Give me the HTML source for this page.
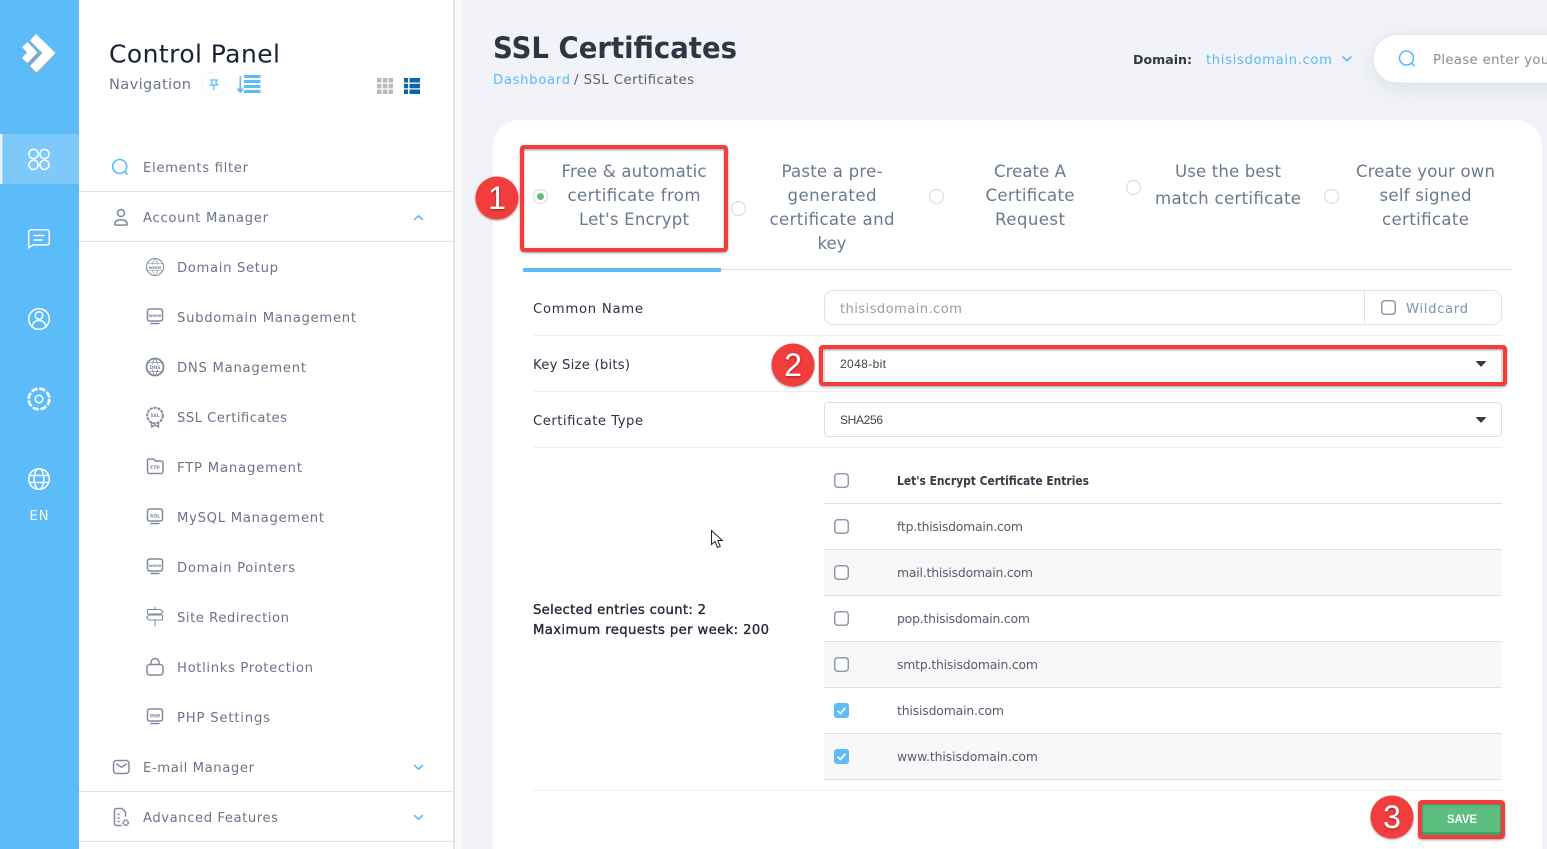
<!DOCTYPE html>
<html lang="en">
<head>
<meta charset="utf-8">
<title>SSL Certificates</title>
<style>
html,body{margin:0;padding:0;width:1547px;height:849px;overflow:hidden;background:#f1f3f8}
svg{display:block}
text{font-family:"DejaVu Sans","Liberation Sans",sans-serif}
.m{font-size:13.2px;fill:#6b7488}
.t{font-size:16.6px;fill:#6c7a8d;text-anchor:middle}
.l{font-size:13.2px;fill:#2c3345}
.e{font-size:12.4px;fill:#565b6e}
.tiny{font-size:4.5px;fill:#8089a0;text-anchor:middle;font-weight:bold}
.ic{fill:none;stroke:#8089a0;stroke-width:1.5;stroke-linecap:round;stroke-linejoin:round}
.w{fill:none;stroke:#fff;stroke-width:1.5;stroke-linecap:round;stroke-linejoin:round}
.b{fill:none;stroke:#5cbbf9;stroke-width:1.6;stroke-linecap:round;stroke-linejoin:round}
.n{font-family:"Liberation Sans",sans-serif;font-size:32px;fill:#fff;text-anchor:middle}
</style>
</head>
<body>
<svg width="1547" height="849" viewBox="0 0 1547 849" xmlns="http://www.w3.org/2000/svg">
<defs>
<filter id="sh" x="-20%" y="-20%" width="140%" height="140%"><feDropShadow dx="0" dy="1" stdDeviation="1" flood-color="#000" flood-opacity=".4"/></filter>
<filter id="soft" x="-30%" y="-60%" width="160%" height="240%"><feDropShadow dx="0" dy="6" stdDeviation="10" flood-color="#8088a8" flood-opacity=".16"/></filter>
<symbol id="mon" viewBox="0 0 20 20" overflow="visible"><rect x="2.5" y="2" width="15" height="12" rx="2" class="ic"/><path d="M6 16.500h8" class="ic"/></symbol>
<symbol id="cb" viewBox="0 0 15 15"><rect x=".75" y=".75" width="13.500" height="13.500" rx="3" fill="#fff" stroke="#7e8aa0" stroke-width="1.300"/></symbol>
<symbol id="cbon" viewBox="0 0 15 15"><rect width="15" height="15" rx="3" fill="#5cbbf9"/><path d="M3.500 7.700l2.800 2.800 5.200-5.700" fill="none" stroke="#fff" stroke-width="1.700"/></symbol>
</defs>

<!-- page -->
<rect width="1547" height="849" fill="#f1f3f8"/>
<rect x="455" width="7" height="849" fill="#fafafa"/>

<!-- icon rail -->
<rect width="79" height="849" fill="#5cbbf9"/>
<rect y="134" width="79" height="50" fill="#7dc9fa"/>
<rect x="0" y="134" width="2.500" height="50" fill="#e4f4fe"/>
<path d="M29 43l9.500 10-9.500 10.500-7-6 4.500-4.500-5-5z" fill="#9a9a9a" opacity=".75" transform="translate(1 1.500)"/>
<path d="M36 34l19.500 19-19 19.500-6.500-6.500 12.500-13-12.500-12.500z" fill="#a8a8a8" transform="translate(0 1.500)"/>
<path d="M36 34l19.500 19-19 19.500-6.500-6.500 12.500-13-12.500-12.500z" fill="#fff"/>
<path d="M27.500 42l10 10.500-10 10.500-5.500-5 5-5.500-5-5.500z" fill="#fff"/>
<g class="w">
<circle cx="33.500" cy="154" r="4.600"/><circle cx="44.500" cy="154" r="4.600"/><circle cx="33.500" cy="164.800" r="4.600"/><circle cx="44.500" cy="164.800" r="4.600"/>
<path d="M31 229.800h16a2.300 2.300 0 0 1 2.300 2.300v10.500a2.300 2.300 0 0 1-2.300 2.300H33l-4.300 3V232.100a2.300 2.300 0 0 1 2.300-2.300z"/>
<path d="M34 235.500h10M34 240h8"/>
<circle cx="39" cy="319" r="10.300"/><circle cx="39" cy="315.500" r="3.800"/><path d="M32 327c.5-4.500 3.500-6.500 7-6.500s6.500 2 7 6.500"/>
<circle cx="39" cy="399" r="10.300" style="stroke-width:2.600;stroke-linecap:butt" stroke-dasharray="6.300 1.790"/>
<circle cx="39" cy="399" r="3.800"/>
<circle cx="39" cy="479" r="10.300"/><ellipse cx="39" cy="479" rx="4.800" ry="10.300"/><path d="M29.500 475.500h19M29.500 482.500h19"/>
</g>
<text x="29.500" y="520" font-size="13px" font-weight="500" fill="#fff" textLength="19">EN</text>

<!-- sidebar -->
<rect x="79" width="374" height="849" fill="#fff"/>
<rect x="453" width="2" height="849" fill="#e2e2e8"/>
<text x="109" y="62.500" font-size="25px" fill="#1b2235" textLength="171">Control Panel</text>
<text x="109" y="89" font-size="14.600px" fill="#6c7488" textLength="82">Navigation</text>
<circle cx="214" cy="84" r="12" fill="#fff" stroke="#f3f5f8"/>
<g class="b" style="stroke-width:1.300"><path d="M210.500 80h7M211.800 80v4.500M216.200 80v4.500M209.700 85h8.600M214 85v5"/></g>
<g fill="#5cbbf9"><rect x="244" y="75" width="16.500" height="3"/><rect x="244" y="80" width="16.500" height="3"/><rect x="244" y="85" width="16.500" height="3"/><rect x="244" y="90" width="16.500" height="3"/><rect x="239.500" y="76" width="1.500" height="16"/><path d="M236.500 88.500h7.500l-3.750 5z"/></g>
<g fill="#bbb"><rect x="377" y="78" width="4.500" height="4.500"/><rect x="382.800" y="78" width="4.500" height="4.500"/><rect x="388.500" y="78" width="4.500" height="4.500"/><rect x="377" y="83.800" width="4.500" height="4.500"/><rect x="382.800" y="83.800" width="4.500" height="4.500"/><rect x="388.500" y="83.800" width="4.500" height="4.500"/><rect x="377" y="89.500" width="4.500" height="4.500"/><rect x="382.800" y="89.500" width="4.500" height="4.500"/><rect x="388.500" y="89.500" width="4.500" height="4.500"/></g>
<g fill="#0b66a8"><rect x="404" y="78" width="4" height="4.500"/><rect x="409.500" y="78" width="10.500" height="4.500"/><rect x="404" y="83.800" width="4" height="4.500"/><rect x="409.500" y="83.800" width="10.500" height="4.500"/><rect x="404" y="89.500" width="4" height="4.500"/><rect x="409.500" y="89.500" width="10.500" height="4.500"/></g>

<circle cx="119.700" cy="166.500" r="7" class="b"/><path d="M124.800 171.800l2.200 2.200" class="b"/>
<text x="143" y="172" class="m" textLength="105">Elements filter</text>
<path d="M79 191.500h374M79 241.500h374M79 791.500h374M79 841.500h374" stroke="#dfe2ec" stroke-width="1.200"/>
<circle cx="121" cy="213" r="3.500" class="ic"/><path d="M114.800 224.500c0-3.500 2.500-4.700 6.200-4.700s6.200 1.200 6.200 4.700c0 .5-1 .6-2 .6h-8.500c-1 0-1.900-.1-1.900-.6z" class="ic"/>
<text x="143" y="222" class="m" textLength="125">Account Manager</text>
<path d="M414.500 219.500l4-3.700 4 3.700" class="b"/>

<text x="177" y="272" class="m" textLength="101">Domain Setup</text>
<text x="177" y="322" class="m" textLength="179">Subdomain Management</text>
<text x="177" y="372" class="m" textLength="129">DNS Management</text>
<text x="177" y="422" class="m" textLength="110">SSL Certificates</text>
<text x="177" y="472" class="m" textLength="125">FTP Management</text>
<text x="177" y="522" class="m" textLength="147">MySQL Management</text>
<text x="177" y="572" class="m" textLength="118">Domain Pointers</text>
<text x="177" y="622" class="m" textLength="112">Site Redirection</text>
<text x="177" y="672" class="m" textLength="136">Hotlinks Protection</text>
<text x="177" y="722" class="m" textLength="93">PHP Settings</text>
<text x="143" y="772" class="m" textLength="111">E-mail Manager</text>
<text x="143" y="822" class="m" textLength="135">Advanced Features</text>
<path d="M414.500 765.500l4 3.700 4-3.700M414.500 815.500l4 3.700 4-3.700" class="b"/>

<!-- sidebar icons -->
<circle cx="155" cy="267" r="8.500" class="ic" style="stroke-width:1"/><path d="M147 263.500h16M147 270.500h16M155 258.500c-4 5-4 12 0 17M155 258.500c4 5 4 12 0 17" class="ic" style="stroke-width:.6"/><rect x="148" y="264.500" width="14" height="5" fill="#fff"/><text x="155" y="269" class="tiny">www</text>
<use href="#mon" x="145" y="307" width="20" height="20"/><text x="155" y="317" class="tiny">www</text>
<circle cx="155" cy="367" r="8.500" class="ic" style="stroke-width:1.800"/><path d="M147 362.500h16M147 371.500h16M155 358.500c-4 5-4 12 0 17M155 358.500c4 5 4 12 0 17" class="ic" style="stroke-width:.8"/><rect x="148" y="364.200" width="14" height="5.500" fill="#fff"/><text x="155" y="369" class="tiny">DNS</text>
<circle cx="155" cy="415.500" r="7.800" class="ic" style="stroke-width:2;stroke-linecap:butt" stroke-dasharray="3 .9"/><path d="M151.500 422.500v4.500l3.500-2 3.500 2v-4.500" class="ic"/><text x="155" y="417" class="tiny">SSL</text>
<path d="M147.500 460.500a1.500 1.500 0 0 1 1.500-1.500h4.500l2 2h5.500a2 2 0 0 1 2 2v8.500a2 2 0 0 1-2 2h-11.500a2 2 0 0 1-2-2z" class="ic"/><text x="155" y="469" class="tiny">FTP</text>
<use href="#mon" x="145" y="507" width="20" height="20"/><text x="155" y="517.500" class="tiny">SQL</text>
<use href="#mon" x="145" y="557" width="20" height="20"/><text x="155" y="567" class="tiny">www</text>
<path d="M155 607v2M155 620v6M147.500 609.500h13l2.500 2.200-2.500 2.300h-13zM149 615h13.500v5H149l-2.500-2.500z" class="ic" style="stroke-width:1"/>
<path d="M151 664.500v-2a4 4 0 0 1 8 0v2" class="ic"/><rect x="147" y="664.500" width="16" height="10.500" rx="2.500" class="ic"/>
<use href="#mon" x="145" y="707" width="20" height="20"/><text x="155" y="717.500" class="tiny">PHP</text>
<rect x="113.500" y="760.500" width="15.500" height="13" rx="3" class="ic"/><path d="M116.500 764l5 3.200 5-3.200" class="ic"/>
<path d="M125.500 816v-4l-3.500-3.500h-5.500a2 2 0 0 0-2 2v13a2 2 0 0 0 2 2h4.500" class="ic"/><path d="M118 814.500h1M118 818h1M118 821.500h1" class="ic"/><circle cx="125.700" cy="822.700" r="2.500" fill="none" stroke="#8089a0" stroke-width="1.800" stroke-dasharray="1.500 .5"/>

<!-- header -->
<text x="493" y="58" font-size="29px" font-weight="bold" fill="#2f3542" textLength="244" lengthAdjust="spacingAndGlyphs">SSL Certificates</text>
<text x="493" y="84" font-size="13.200px" fill="#5cbbf9" textLength="77">Dashboard</text>
<text x="574" y="84" font-size="13.200px" fill="#5b6070" textLength="120">/ SSL Certificates</text>
<text x="1133" y="64" font-size="12.400px" font-weight="bold" fill="#333742" textLength="59" lengthAdjust="spacingAndGlyphs">Domain:</text>
<text x="1206" y="64" font-size="13.200px" fill="#5cbbf9" textLength="126">thisisdomain.com</text>
<path d="M1343 57l4 3.700 4-3.700" class="b"/>
<rect x="1373" y="34.500" width="260" height="48.500" rx="24" fill="#fff" stroke="#dfe3ec" filter="url(#soft)"/>
<circle cx="1406.500" cy="58" r="7" class="b"/><path d="M1411.800 63.300l2.200 2.200" class="b"/>
<text x="1433" y="64" font-size="13.200px" fill="#888c96" textLength="122">Please enter your</text>

<!-- card -->
<path d="M493 849V147a27 27 0 0 1 27-27h995a27 27 0 0 1 27 27v702z" fill="#fff"/>

<!-- tabs -->
<text x="634" y="177" class="t" textLength="145">Free &amp; automatic</text>
<text x="634" y="201" class="t" textLength="133">certificate from</text>
<text x="634" y="225" class="t" textLength="110">Let's Encrypt</text>
<text x="832" y="177" class="t" textLength="101">Paste a pre-</text>
<text x="832" y="201" class="t" textLength="89">generated</text>
<text x="832" y="225" class="t" textLength="125">certificate and</text>
<text x="832" y="249" class="t" textLength="29">key</text>
<text x="1030" y="177" class="t" textLength="72">Create A</text>
<text x="1030" y="201" class="t" textLength="89">Certificate</text>
<text x="1030" y="225" class="t" textLength="70">Request</text>
<text x="1228" y="177" class="t" textLength="106">Use the best</text>
<text x="1228" y="204" class="t" textLength="146">match certificate</text>
<text x="1425.500" y="177" class="t" textLength="139">Create your own</text>
<text x="1425.500" y="201" class="t" textLength="92">self signed</text>
<text x="1425.500" y="225" class="t" textLength="87">certificate</text>
<g fill="#fff" stroke="#ddd" stroke-width="1.200">
<circle cx="540.500" cy="196.500" r="7"/><circle cx="738.500" cy="208.500" r="7"/><circle cx="936.500" cy="196.500" r="7"/><circle cx="1133.500" cy="187.500" r="7"/><circle cx="1331.500" cy="196.500" r="7"/>
</g>
<circle cx="540.500" cy="196.500" r="3.500" fill="#5cbf7f"/>
<rect x="523" y="269" width="989" height="1" fill="#e0e0e0"/>
<rect x="523" y="268" width="198" height="4" fill="#5cbbf9"/>

<!-- form -->
<path d="M533 335.500h969M533 391.500h969M533 447.500h969M533 790.500h969" stroke="#eeeeee" stroke-width="1"/>
<text x="533" y="313" class="l" textLength="110">Common Name</text>
<text x="533" y="369" class="l" textLength="97">Key Size (bits)</text>
<text x="533" y="425" class="l" textLength="110">Certificate Type</text>
<rect x="824.500" y="290.500" width="677" height="34" rx="9" fill="#fff" stroke="#dde3ec"/>
<path d="M1364.500 291v33" stroke="#dde3ec"/>
<text x="840" y="313" font-size="13.200px" fill="#999ca3" textLength="122">thisisdomain.com</text>
<use href="#cb" x="1381" y="300" width="15" height="15"/>
<text x="1406" y="313" font-size="13.200px" fill="#7d94ae" textLength="62">Wildcard</text>

<rect x="824.500" y="346.500" width="677" height="38" rx="3" fill="#fff" stroke="#ddd"/>
<text x="840" y="368" font-size="12px" fill="#444" style="font-family:'Liberation Sans',sans-serif" textLength="46">2048-bit</text>
<path d="M1475.500 361h11l-5.500 6z" fill="#3c3c3c"/>
<rect x="824.500" y="402.500" width="677" height="34" rx="4" fill="#fff" stroke="#ddd"/>
<text x="840" y="424" font-size="12px" fill="#444" style="font-family:'Liberation Sans',sans-serif" textLength="43">SHA256</text>
<path d="M1475.500 417h11l-5.500 6z" fill="#3c3c3c"/>

<text x="533" y="614" font-size="13.200px" fill="#23293a" stroke="#23293a" stroke-width=".35" textLength="173">Selected entries count: 2</text>
<text x="533" y="634" font-size="13.200px" fill="#23293a" stroke="#23293a" stroke-width=".35" textLength="236">Maximum requests per week: 200</text>

<!-- table -->
<g fill="#f8f8f8"><rect x="824" y="549" width="678" height="46"/><rect x="824" y="641" width="678" height="46"/><rect x="824" y="733" width="678" height="46"/></g>
<path d="M824 503.500h678M824 549.500h678M824 595.500h678M824 641.500h678M824 687.500h678M824 733.500h678M824 779.500h678" stroke="#e0e0e0" stroke-width="1"/>
<use href="#cb" x="834" y="473" width="15" height="15"/>
<use href="#cb" x="834" y="519" width="15" height="15"/>
<use href="#cb" x="834" y="565" width="15" height="15"/>
<use href="#cb" x="834" y="611" width="15" height="15"/>
<use href="#cb" x="834" y="657" width="15" height="15"/>
<use href="#cbon" x="834" y="703" width="15" height="15"/>
<use href="#cbon" x="834" y="749" width="15" height="15"/>
<text x="897" y="485" font-size="12.200px" font-weight="bold" fill="#363a46" textLength="192" lengthAdjust="spacingAndGlyphs">Let's Encrypt Certificate Entries</text>
<text x="897" y="531" class="e" textLength="126">ftp.thisisdomain.com</text>
<text x="897" y="577" class="e" textLength="136">mail.thisisdomain.com</text>
<text x="897" y="623" class="e" textLength="133">pop.thisisdomain.com</text>
<text x="897" y="669" class="e" textLength="141">smtp.thisisdomain.com</text>
<text x="897" y="715" class="e" textLength="107">thisisdomain.com</text>
<text x="897" y="761" class="e" textLength="141">www.thisisdomain.com</text>

<!-- save -->
<rect x="1420" y="802" width="83" height="35" rx="2" fill="#5cbf7f"/>
<rect x="1422" y="804" width="79" height="2" fill="#72c68f"/>
<rect x="1422" y="832" width="79" height="3" fill="#45a56a"/>
<text x="1462" y="823" font-size="12px" font-weight="bold" fill="#fff" text-anchor="middle" textLength="30" lengthAdjust="spacingAndGlyphs" style="font-family:'Liberation Sans',sans-serif">SAVE</text>

<!-- annotations -->
<g fill="none" stroke="#f23c3c" stroke-width="4" filter="url(#sh)">
<rect x="522" y="147" width="204" height="103" rx="2"/>
<rect x="821" y="347" width="684" height="37" rx="2"/>
<rect x="1420" y="802" width="83" height="35" rx="2"/>
</g>
<g filter="url(#sh)" fill="#f23c3c"><circle cx="497" cy="198" r="21.500"/><circle cx="793" cy="365" r="21.500"/><circle cx="1392" cy="817" r="21.500"/></g>
<text x="497" y="209" class="n" filter="url(#sh)">1</text>
<text x="793" y="376" class="n" filter="url(#sh)">2</text>
<text x="1392" y="828" class="n" filter="url(#sh)">3</text>

<!-- cursor -->
<path d="M711.500 530.500v14l3.500-3 2.500 6 2.800-1.200-2.500-5.800h4.500z" fill="#fff" stroke="#222" stroke-width="1"/>
</svg>
</body>
</html>
